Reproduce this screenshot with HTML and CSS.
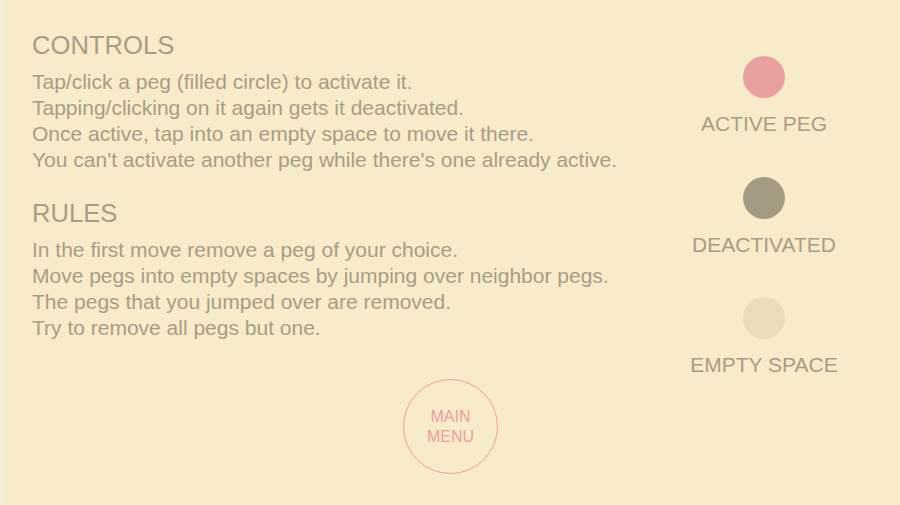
FILE: index.html
```html
<!DOCTYPE html>
<html>
<head>
<meta charset="utf-8">
<link rel="stylesheet" href="styles.css">
</head>
<body>
<div class="page">
  <div class="top">
    <div class="info">
      <h2 class="heading">CONTROLS</h2>
      <p class="lines">Tap/click a peg (filled circle) to activate it.<br>Tapping/clicking on it again gets it deactivated.<br>Once active, tap into an empty space to move it there.<br>You can't activate another peg while there's one already active.</p>
      <h2 class="heading rules">RULES</h2>
      <p class="lines">In the first move remove a peg of your choice.<br>Move pegs into empty spaces by jumping over neighbor pegs.<br>The pegs that you jumped over are removed.<br>Try to remove all pegs but one.</p>
    </div>
    <div class="legend">
      <div class="item"><span class="peg active"></span><span class="label">ACTIVE PEG</span></div>
      <div class="item"><span class="peg inactive"></span><span class="label">DEACTIVATED</span></div>
      <div class="item"><span class="peg empty"></span><span class="label">EMPTY SPACE</span></div>
    </div>
  </div>
  <div class="menu-row">
    <button class="menu">MAIN<br>MENU</button>
  </div>
</div>
</body>
</html>
```
FILE: styles.css
```css
html, body {
  margin: 0;
  padding: 0;
  height: 100%;
}
body {
  background: #f8ebc9;
  font-family: "Liberation Sans", Arial, sans-serif;
  color: #a89d86;
  border-left: 1px solid #eef0ee;
  box-sizing: border-box;
}
.page {
  display: flex;
  flex-direction: column;
  height: 100%;
}
.top {
  display: flex;
  justify-content: space-between;
}
.info {
  padding: 31px 0 0 31px;
}
.heading {
  font-weight: normal;
  font-size: 25.6px;
  line-height: 28px;
  margin: 0 0 10px 0;
}
.heading.rules {
  margin-top: 26px;
}
.lines {
  font-size: 21px;
  line-height: 26px;
  margin: 0;
}
.legend {
  width: 200px;
  margin-right: 36px;
  padding-top: 56px;
  display: flex;
  flex-direction: column;
  align-items: center;
  gap: 40.5px;
}
.item {
  display: flex;
  flex-direction: column;
  align-items: center;
  gap: 14px;
}
.peg {
  width: 42px;
  height: 42px;
  border-radius: 50%;
  display: block;
}
.peg.active { background: #e8a0a0; }
.peg.inactive { background: #a59a83; }
.peg.empty { background: #e9dcbb; }
.label {
  font-size: 21px;
  line-height: 24px;
}
.menu-row {
  display: flex;
  justify-content: center;
  padding-top: 2px;
}
.menu {
  width: 95px;
  height: 95px;
  border-radius: 50%;
  border: 1.7px solid #eb9ea0;
  background: transparent;
  color: #eb9ea0;
  font-family: "Liberation Sans", Arial, sans-serif;
  font-size: 16px;
  line-height: 20px;
  padding: 0;
}
```
